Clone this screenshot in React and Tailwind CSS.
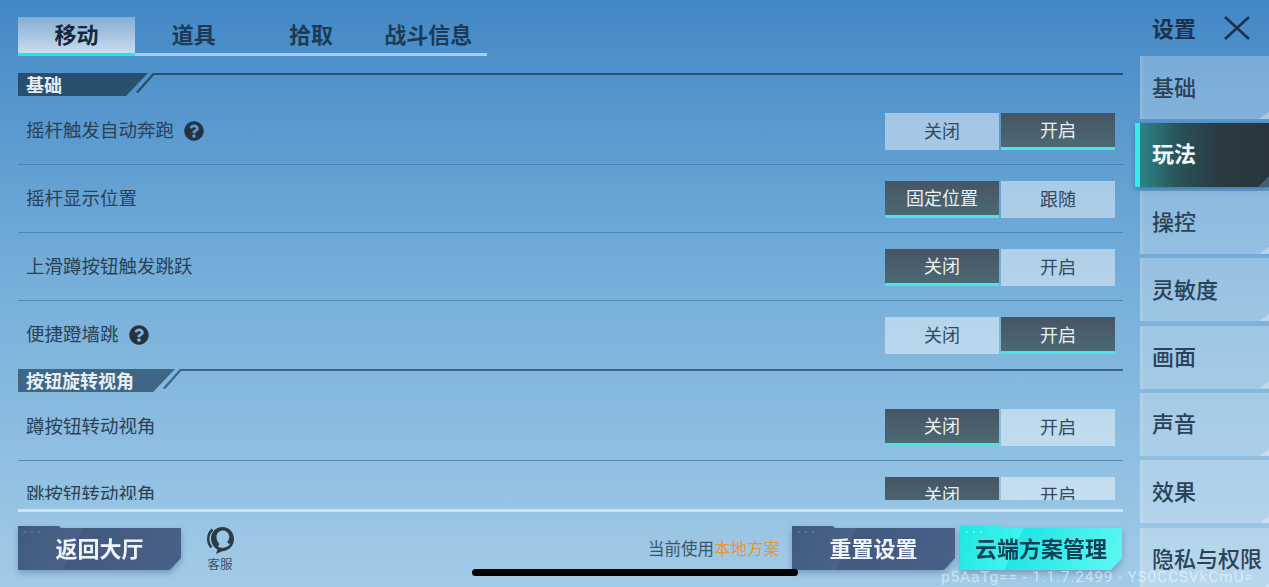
import { FaQuestionCircle } from "react-icons/fa";

const CJK = "font-['Noto_Sans_CJK_SC','Noto_Sans',sans-serif]";

function Tabs() {
    const tabs = ["移动", "道具", "拾取", "战斗信息"];
    return (
        <div className="flex w-[469px] h-[39px] border-b-[3px] border-[#a6cdec]">
            {tabs.map((t, i) => (
                <div key={t}
                     className={i === 0
                         ? "relative flex-1 flex items-center justify-center pb-[4px] text-[22px] font-bold text-[#15283a] bg-gradient-to-b from-[#86add4] to-[#c9dcee]"
                         : "relative flex-1 flex items-center justify-center pb-[4px] text-[22px] font-bold text-[#1d3a55]"}>
                    {t}
                    {i === 0 && <div className="absolute left-0 right-0 -bottom-[3px] h-[3px] bg-[#24e6dc]" />}
                </div>
            ))}
        </div>
    );
}

function SectionHeader({ title, width, color }) {
    return (
        <div className="relative flex h-[23px] shrink-0">
            <div style={{ width, backgroundColor: color }}
                 className="h-[23px] pl-2 pb-[2px] flex items-center text-[18px] font-bold leading-none text-[#e6eef4] [clip-path:polygon(0_0,100%_0,calc(100%-22px)_100%,0_100%)]">
                {title}
            </div>
            <svg width="24" height="20" viewBox="0 0 24 20" className="-ml-[15px] shrink-0" fill="none">
                <path d="M20.5 1 L4 19.5" stroke={color} strokeWidth="2.4" />
            </svg>
            <div className="flex-1 h-[2px] -ml-[4px]" style={{ backgroundColor: color }} />
        </div>
    );
}

function Toggle({ options, active }) {
    return (
        <div className="flex gap-[2px]">
            {options.map((o, i) => (
                <div key={o}
                     className={i === active
                         ? "w-[114px] h-[37px] flex items-center justify-center text-[18px] text-[#eaf0f4] bg-gradient-to-b from-[#475464] to-[#4b6a73] border-b-[3px] border-[#46e8e2]"
                         : "w-[114px] h-[37px] pb-[2px] flex items-center justify-center text-[18px] text-[#34495e] bg-white/45"}>
                    {o}
                </div>
            ))}
        </div>
    );
}

function Row({ label, help, options = ["关闭", "开启"], active, last }) {
    return (
        <div className={"flex items-center justify-between h-[68px] shrink-0 pl-2 pr-2 " + (last ? "" : "border-b border-[#3f78a5]/70")}>
            <div className="flex items-center gap-[10px] text-[18.5px] text-[#2a4156]">
                <span className="-mt-[2px]">{label}</span>
                {help && <FaQuestionCircle className="text-[#26323d]" size={20} />}
            </div>
            <div className="pt-[1px]">
                <Toggle options={options} active={active} />
            </div>
        </div>
    );
}

function ActionButton({ children, width, cyan }) {
    return (
        <div className="drop-shadow-[0_3px_3px_rgba(40,70,110,0.35)]">
            <div style={{ width }}
                 className={"relative h-[44px] pb-[2px] flex items-center justify-center text-[22px] font-bold [clip-path:polygon(0_0,41px_0,43px_2px,100%_2px,100%_32px,calc(100%-11px)_100%,0_100%)] "
                     + (cyan
                         ? "text-[#123f55] bg-[linear-gradient(115deg,#1fe6e0_0%,#3ff4ee_35%,#22e6e6_36%,#5ff8f2_100%)]"
                         : "text-[#f0f4f8] bg-[linear-gradient(115deg,#3f5a80_0%,#4a6288_35%,#415a7e_36%,#49608a_100%)]")}>
                <div className={"absolute left-[4px] top-[3px] text-[6px] leading-none tracking-[1px] " + (cyan ? "text-white/80" : "text-white/30")}>•••</div>
                {children}
            </div>
        </div>
    );
}

function ServiceIcon() {
    return (
        <div className="flex flex-col items-center ml-[25px] w-[28px]">
            <svg width="29" height="31" viewBox="0 0 29 31">
                <path fillRule="evenodd" fill="#2b3b48"
                      d="M16.5 1 C9.5 1 5 6.5 5 12.5 C5 17.5 8 21.5 11.5 23.5 L10 28 L16 25.2 C23 25 28 19.5 28 13 C28 6.5 23 1 16.5 1 Z M16.8 4.5 C12.8 4.5 10.3 7.6 10.5 11.5 C10.6 14 11.8 16 13 17.6 C13.5 18.6 12.8 19.6 11.8 20.3 C13.6 21.6 16 22.2 18.5 21.6 C21 21 23 19.8 24 18 C22.8 17.6 21.6 17 21.2 16 C22.6 14.4 23.4 12.4 23.2 10.4 C22.9 7 20.3 4.5 16.8 4.5 Z" />
                <path fill="none" stroke="#2b3b48" strokeWidth="2.4" d="M6.5 3.5 C1 8.5 0.8 16 5.5 21.5" />
            </svg>
            <div className="text-[12.5px] leading-none mt-[1px] text-[#3a5063] whitespace-nowrap">客服</div>
        </div>
    );
}

function SideItem({ label, active }) {
    if (active) {
        return (
            <div className="relative h-[64px] -my-[0.5px] shrink-0 flex items-center pl-[12px] pb-[4px] border-l-[5px] border-[#35ecec] text-[22px] font-bold text-[#f2f7f8] bg-[linear-gradient(90deg,#2b8487_0%,#2a5258_30%,#2a3b44_60%,#28353e_100%)] shadow-[0_2px_5px_rgba(30,60,90,0.45)]">
                {label}
                <div className="absolute right-0 bottom-0 w-[11px] h-[11px] bg-[#43606e] [clip-path:polygon(100%_0,100%_100%,0_100%)]" />
            </div>
        );
    }
    return (
        <div className="relative h-[63px] ml-[5px] shrink-0 flex items-center pl-[12px] pb-[3px] text-[22px] font-medium text-[#2b4258] bg-white/25 border-l-[3px] border-white/10">
            <span className="-ml-[3px]">{label}</span>
            <div className="absolute right-0 bottom-0 w-[10px] h-[7px] bg-white/30 [clip-path:polygon(100%_0,100%_100%,0_100%)]" />
        </div>
    );
}

export default function App() {
    const sideItems = ["基础", "玩法", "操控", "灵敏度", "画面", "声音", "效果", "隐私与权限"];
    return (
        <div className={"relative flex w-[1269px] h-[587px] overflow-hidden bg-gradient-to-b from-[#4288c6] via-[#78b0da] to-[#a2cbe7] " + CJK}>
            <div className="w-[1135px] shrink-0 pl-[18px] pr-[12px] pt-[17px] flex flex-col">
                <Tabs />
                <div className="h-[427px] mt-[17px] overflow-hidden flex flex-col">
                    <SectionHeader title="基础" width={130} color="#27506f" />
                    <div className="h-px shrink-0" />
                    <Row label="摇杆触发自动奔跑" help active={1} />
                    <Row label="摇杆显示位置" options={["固定位置", "跟随"]} active={0} />
                    <Row label="上滑蹲按钮触发跳跃" active={0} />
                    <Row label="便捷蹬墙跳" help active={1} last />
                    <SectionHeader title="按钮旋转视角" width={157} color="#3f6685" />
                    <div className="h-px shrink-0" />
                    <Row label="蹲按钮转动视角" active={0} />
                    <Row label="跳按钮转动视角" active={0} last />
                </div>
                <div className="h-[3px] mt-[9px] bg-[#cfe4f3]" />
                <div className="flex items-start mt-[14px]">
                    <ActionButton width={163}>返回大厅</ActionButton>
                    <ServiceIcon />
                    <div className="ml-auto flex items-center gap-[12px]">
                        <div className="text-[16.5px] text-[#3b5368] whitespace-nowrap">
                            当前使用<span className="text-[#e79a2a]">本地方案</span>
                        </div>
                        <ActionButton width={163}>重置设置</ActionButton>
                    </div>
                    <div className="ml-[5px] mr-[1px]">
                        <ActionButton width={162} cyan>云端方案管理</ActionButton>
                    </div>
                </div>
            </div>
            <div className="flex-1 flex flex-col">
                <div className="h-[56px] shrink-0 flex items-center justify-between pl-[17px] pr-[18px] pb-[1px]">
                    <span className="text-[22px] font-bold leading-none text-[#1d3248] -mt-[2px]">设置</span>
                    <svg width="28" height="24" viewBox="0 0 28 24" fill="none" stroke="#1d3248" strokeWidth="2.6">
                        <path d="M2 1 L26 23 M26 1 L2 23" />
                    </svg>
                </div>
                <div className="flex flex-col gap-[4.4px]">
                    {sideItems.map(s => <SideItem key={s} label={s} active={s === "玩法"} />)}
                </div>
            </div>
            <div className="absolute left-[472px] top-[569px] w-[326px] h-[7px] rounded-full bg-black" />
            <div className="absolute left-[941px] top-[568px] w-[320px] font-['Roboto',sans-serif] text-[15.5px] tracking-[0.8px] leading-[18px] text-white/50 whitespace-nowrap">
                p5AaTg== - 1.1.7.2499 - YS0CCSVkCmU=
            </div>
        </div>
    );
}
